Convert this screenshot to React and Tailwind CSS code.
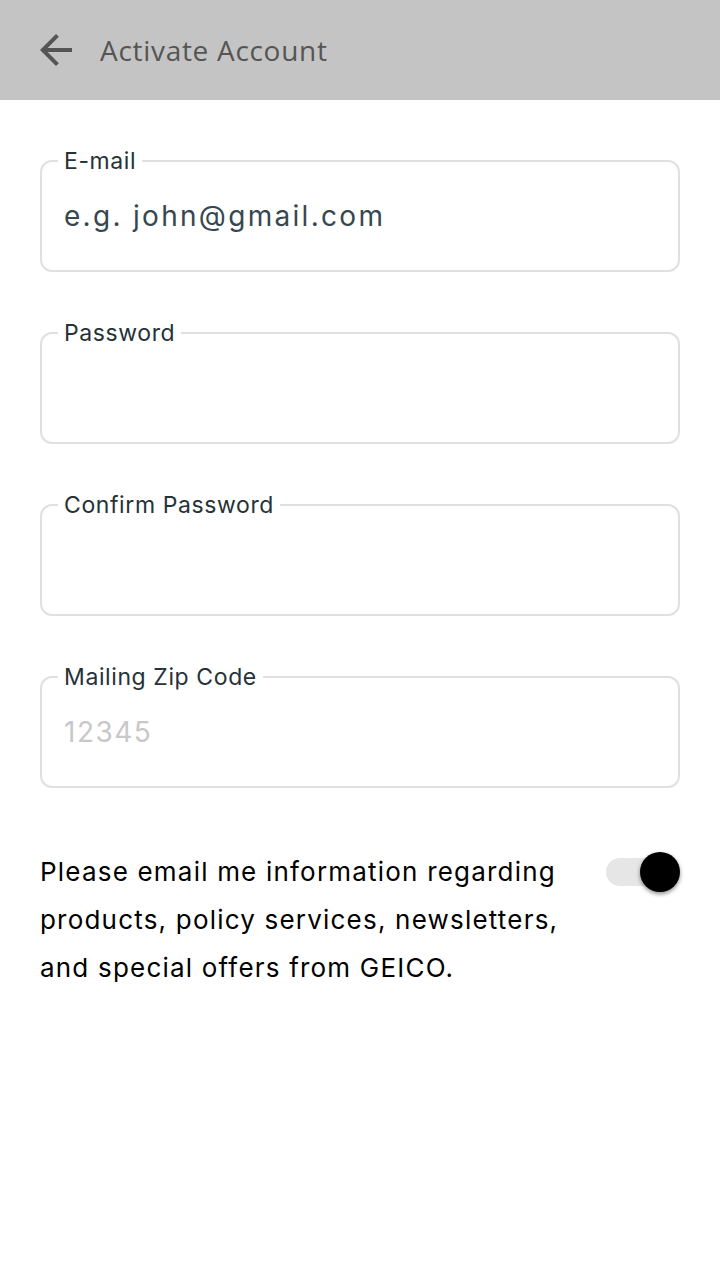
import React, { useState } from 'react';

const fields = [
  { label: 'E-mail', placeholder: 'e.g. john@gmail.com', dark: true },
  { label: 'Password', placeholder: '' },
  { label: 'Confirm Password', placeholder: '' },
  { label: 'Mailing Zip Code', placeholder: '12345' },
];

const Field = ({ label, placeholder, dark }) => (
  <fieldset className="h-[124px] rounded-xl border-2 border-[#e0e0e0] px-[22px]">
    <legend className="-ml-[6px] px-[6px] text-[23px] leading-[26px] tracking-[0.6px] text-[#263238]">
      {label}
    </legend>
    <input
      className={`mt-[22px] h-10 w-full bg-transparent text-[28px] leading-[40px] outline-none ${
        dark ? 'tracking-[2.3px] placeholder:text-[#37474f]' : 'tracking-[1.5px] placeholder:text-[#c8c8c8]'
      }`}
      placeholder={placeholder}
    />
  </fieldset>
);

const App = () => {
  const [optIn, setOptIn] = useState(true);

  return (
    <div className="min-h-[1280px] bg-white font-['Inter',sans-serif]">
      <header className="flex h-[100px] items-center bg-[#c4c4c4] px-8">
        <svg viewBox="0 0 24 24" className="h-12 w-12 fill-[#555555]">
          <path d="M20 11H7.83l5.59-5.59L12 4l-8 8 8 8 1.41-1.41L7.83 13H20v-2z" />
        </svg>
        <h1 className="ml-5 font-['Open_Sans',sans-serif] text-[28px] tracking-[0.7px] text-[#555555]">
          Activate Account
        </h1>
      </header>

      <div className="flex flex-col gap-12 px-10 pt-12">
        {fields.map((f) => (
          <Field key={f.label} {...f} />
        ))}
      </div>

      <div className="flex items-start justify-between px-10 pt-[60px]">
        <p className="text-[26px] leading-[48px] tracking-[1.2px] text-black">
          Please email me information regarding
          <br />
          products, policy services, newsletters,
          <br />
          and special offers from GEICO.
        </p>
        <button onClick={() => setOptIn(!optIn)} className="relative mt-[4px] h-10 w-[74px] shrink-0">
          <span className="absolute left-0 top-[6px] h-7 w-16 rounded-full bg-[#e6e6e6]" />
          <span
            className={`absolute top-0 h-10 w-10 rounded-full shadow-[0_2px_4px_rgba(0,0,0,0.45)] ${
              optIn ? 'right-0 bg-black' : 'left-0 bg-white'
            }`}
          />
        </button>
      </div>
    </div>
  );
};

export default App;
